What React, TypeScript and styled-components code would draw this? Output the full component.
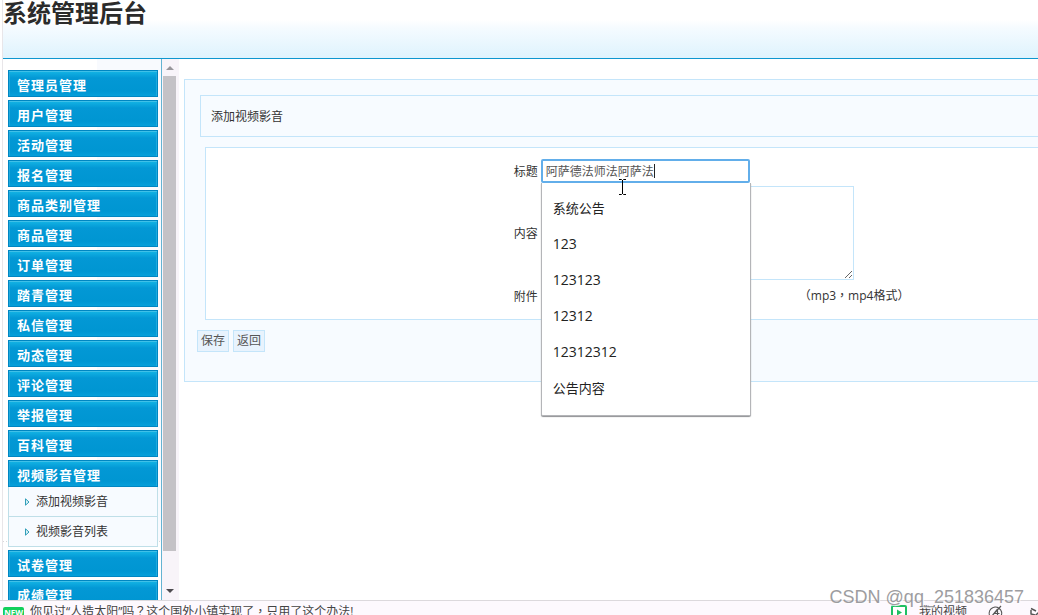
import React, { useState } from "react";
import styled, { createGlobalStyle } from "styled-components";

const Global = createGlobalStyle`
  * { box-sizing: border-box; }
  body {
    margin: 0;
    background: #fff;
    color: #333;
    font: 12px/18px "Open Sans", "Noto Sans CJK SC", sans-serif;
    overflow: hidden;
  }
  button, input, textarea { font: inherit; color: inherit; }
`;

const Page = styled.div`
  position: relative;
  display: flex;
  flex-direction: column;
  height: 100vh;
  overflow: hidden;
`;

const Frame = styled.div`
  flex: 1;
  min-height: 0;
  display: flex;
  flex-direction: column;
  margin-left: 2px;
  border-left: 1px solid #e8e6e9;
`;

const Header = styled.header`
  flex: none;
  height: 59px;
  border-bottom: 1px solid #0e97cf;
  background: linear-gradient(#fff 20px, #f5fbff 28px, #def3fd 58px);
`;

const Title = styled.h1`
  margin: 0;
  font-size: 24px;
  line-height: 26px;
  color: #2b2b2b;
`;

const Columns = styled.div`
  flex: 1;
  min-height: 0;
  display: flex;
`;

const Sidebar = styled.nav`
  flex: none;
  width: 159px;
  padding: 11px 3px 0 5px;
  border-right: 1px solid #64b3d2;
  background:
    repeating-linear-gradient(90deg, #d8d8da 0 1px, transparent 1px 3px) 0 482px / 100% 1px no-repeat,
    linear-gradient(90deg, #f8fafe, #f8fafe) 100% 0 / 64px 482px no-repeat;
  overflow: hidden;
`;

const Group = styled.section`
  margin-bottom: 3px;
`;

const GroupButton = styled.button`
  display: block;
  width: 100%;
  height: 27px;
  padding: 2px 8px 0;
  border: 1px solid #0086c2;
  background: linear-gradient(#14b5e5, #0398d5 7px, #0096d2 20px, #069fda);
  box-shadow: inset 0 1px #3fc0e8, inset -1px 0 #1eaade, inset 1px 0 #1eaade;
  color: #fff;
  font-size: 13px;
  font-weight: bold;
  line-height: 20px;
  letter-spacing: 1px;
  text-align: left;
`;

const SubLink = styled.a`
  display: flex;
  align-items: center;
  gap: 6px;
  height: 30px;
  padding-left: 16px;
  border: 1px solid #bfdfe8;
  border-top: 0;
  background: #f7fbff;
  color: #333;
  text-decoration: none;
`;

const Scrollbar = styled.div`
  flex: none;
  display: flex;
  flex-direction: column;
  align-items: center;
  justify-content: space-between;
  width: 17px;
  padding: 7px 2px 7px 0;
  background: #f8f4f9;
`;

const Thumb = styled.div`
  flex: 1;
  width: 13px;
  margin: 6px 0 38px;
  background: #c4c2c6;
`;

const Main = styled.main`
  flex: 1;
  min-width: 0;
  padding: 20px 0 0 5px;
`;

const Panel = styled.form`
  padding: 15px 0 29px 12px;
  border: 1px solid #c4e5fa;
  border-right: 0;
  background: #f7fbff;
`;

const PanelTitle = styled.h2`
  margin: 0 0 10px 3px;
  padding: 11px 10px 9px;
  border: 1px solid #c4e5fa;
  border-right: 0;
  font-size: 12px;
  font-weight: normal;
  line-height: 20px;
`;

const Fields = styled.div`
  display: flex;
  flex-direction: column;
  gap: 3px;
  margin-left: 8px;
  padding: 11px 0 10px;
  border: 1px solid #c4e5fa;
  border-right: 0;
  background: #fff;
`;

const Row = styled.div`
  display: grid;
  grid-template-columns: 40% 1fr;
  column-gap: 2px;
  align-items: center;
`;

const Label = styled.label`
  padding: 1px 1px 0 0;
  text-align: right;
`;

const Control = styled.div`
  position: relative;
  display: flex;
  align-items: center;
`;

const TextInput = styled.input`
  width: 209px;
  height: 24px;
  padding: 0 3px 1px;
  border: 2px solid #62aeea;
  border-radius: 2px;
  outline: 0;
  background: #fff;
  color: #555;
`;

const TextArea = styled.textarea`
  display: block;
  width: 313px;
  height: 94px;
  border: 1px solid #c4e5fa;
  background: #fff;
  outline: 0;
`;

const FileInput = styled.input`
  width: 258px;
  height: 26px;
`;

const Hint = styled.span`
  font-family: "Open Sans", "Noto Sans CJK TC", sans-serif;
`;

const Suggestions = styled.ul`
  position: absolute;
  z-index: 2;
  top: 24px;
  left: 0;
  width: 210px;
  margin: 0;
  padding: 7px 0 9px;
  border: 1px solid #b4b5b8;
  border-top: 0;
  border-radius: 0 0 2px 2px;
  background: #fff;
  box-shadow: 0 1px 1px #8e9093;
  list-style: none;
  color: #222;
`;

const Suggestion = styled.li<{ $numeric: boolean }>`
  height: 36px;
  padding: 0 11px;
  font-size: ${(p) => (p.$numeric ? 14 : 13)}px;
  line-height: 36px;
`;

const Caret = styled.span`
  position: absolute;
  left: 113px;
  top: 5px;
  width: 1px;
  height: 14px;
  background: #222;
`;

const Pointer = styled.svg`
  position: absolute;
  z-index: 3;
  left: 77px;
  top: 20px;
`;

const Actions = styled.div`
  display: flex;
  gap: 4px;
  margin-top: 10px;
`;

const ActionButton = styled.button`
  width: 32px;
  height: 22px;
  padding: 0;
  border: 1px solid #c4e5fa;
  background: #e8f3fd;
  color: #555;
  line-height: 18px;
`;

const StatusBar = styled.footer`
  flex: none;
  display: flex;
  justify-content: space-between;
  height: 15px;
  padding-left: 3px;
  border-top: 1px solid #dcd9dd;
  background: #fdf9fe;
  color: #444;
  line-height: 22px;
  overflow: hidden;
`;

const News = styled.a`
  display: flex;
  gap: 6px;
  color: inherit;
  text-decoration: none;
  white-space: nowrap;
`;

const Badge = styled.span`
  width: 21px;
  height: 12px;
  margin-top: 6px;
  border-radius: 2px;
  background: #12cf5c;
  color: #fff;
  font-size: 8px;
  font-weight: bold;
  line-height: 11px;
  text-align: center;
`;

const Tools = styled.div`
  display: flex;
  flex: none;

  svg { flex: none; margin-top: 4px; }
  span { margin: 0 21px 0 12px; white-space: nowrap; }
  svg + svg { margin-left: 26px; margin-right: -8px; }
`;

const Watermark = styled.div`
  position: absolute;
  z-index: 4;
  right: 14px;
  bottom: 8px;
  color: #8d8d90;
  font: 18px/20px "Liberation Sans", sans-serif;
  text-shadow: 1px 1px #fff;
  opacity: 0.85;
  pointer-events: none;
`;

const GROUPS: { name: string; links?: string[] }[] = [
  { name: "管理员管理" },
  { name: "用户管理" },
  { name: "活动管理" },
  { name: "报名管理" },
  { name: "商品类别管理" },
  { name: "商品管理" },
  { name: "订单管理" },
  { name: "踏青管理" },
  { name: "私信管理" },
  { name: "动态管理" },
  { name: "评论管理" },
  { name: "举报管理" },
  { name: "百科管理" },
  { name: "视频影音管理", links: ["添加视频影音", "视频影音列表"] },
  { name: "试卷管理" },
  { name: "成绩管理" },
];

const HISTORY = ["系统公告", "123", "123123", "12312", "12312312", "公告内容"];

const ScrollArrow = ({ down = false }: { down?: boolean }) => (
  <svg width="8" height="4" viewBox="0 0 8 4">
    <path d={down ? "M0 0h8L4 4z" : "M0 4h8L4 0z"} fill={down ? "#4c4a4f" : "#98969b"} />
  </svg>
);

export default function App() {
  const [title, setTitle] = useState("阿萨德法师法阿萨法");
  return (
    <Page>
      <Global />
      <Frame>
        <Header>
          <Title>系统管理后台</Title>
        </Header>
        <Columns>
          <Sidebar>
            {GROUPS.map((g) => (
              <Group key={g.name}>
                <GroupButton type="button">{g.name}</GroupButton>
                {g.links?.map((l) => (
                  <SubLink href="#" key={l}>
                    <svg width="5" height="8" viewBox="0 0 5 8">
                      <path d="M.5.8v6.400L4 4z" fill="#d9f1f7" stroke="#319fb9" />
                    </svg>
                    {l}
                  </SubLink>
                ))}
              </Group>
            ))}
          </Sidebar>
          <Scrollbar>
            <ScrollArrow />
            <Thumb />
            <ScrollArrow down />
          </Scrollbar>
          <Main>
            <Panel onSubmit={(e) => e.preventDefault()}>
              <PanelTitle>添加视频影音</PanelTitle>
              <Fields>
                <Row>
                  <Label htmlFor="title">标题</Label>
                  <Control>
                    <TextInput
                      id="title"
                      autoComplete="off"
                      value={title}
                      onChange={(e) => setTitle(e.target.value)}
                    />
                    <Caret />
                    <Suggestions>
                      {HISTORY.map((h) => (
                        <Suggestion key={h} $numeric={/^\d+$/.test(h)}>
                          {h}
                        </Suggestion>
                      ))}
                    </Suggestions>
                    <Pointer width="9" height="16" viewBox="0 0 9 16">
                      <path
                        d="M1 .5h2.500l1 1 1-1H8M4.500 1v14M1 15.500h2.500l1-1 1 1H8"
                        fill="none"
                        stroke="#000"
                      />
                    </Pointer>
                  </Control>
                </Row>
                <Row>
                  <Label htmlFor="content">内容</Label>
                  <Control>
                    <TextArea id="content" />
                  </Control>
                </Row>
                <Row>
                  <Label htmlFor="file">附件</Label>
                  <Control>
                    <FileInput id="file" type="file" />
                    <Hint>（mp3，mp4格式）</Hint>
                  </Control>
                </Row>
              </Fields>
              <Actions>
                <ActionButton type="submit">保存</ActionButton>
                <ActionButton type="button">返回</ActionButton>
              </Actions>
            </Panel>
          </Main>
        </Columns>
      </Frame>
      <StatusBar>
        <News href="#">
          <Badge>NEW</Badge>
          <Hint>你见过“人造太阳”吗？这个国外小镇实现了，只用了这个办法!</Hint>
        </News>
        <Tools>
          <svg width="16" height="14" viewBox="0 0 16 14">
            <rect x="1" y="1" width="14" height="14" rx="1" fill="#fff" stroke="#1fc063" strokeWidth="2" />
            <path d="M6 4.500v6l5-3z" fill="#1fc063" />
          </svg>
          <span>我的视频</span>
          <svg width="16" height="14" viewBox="0 0 16 14" fill="none" stroke="#555" strokeWidth="1.200">
            <path d="M2.500 12A6.200 6.200 0 1 1 13 11M13 1L2 13M9.500 4L6 8.500h5.500M9.500 4v8" />
          </svg>
          <svg width="16" height="14" viewBox="0 0 16 14" fill="none" stroke="#555" strokeWidth="1.500">
            <path d="M1 3.500l5 2.500M1 5v4l4 1M3 13L13 3" />
          </svg>
        </Tools>
      </StatusBar>
      <Watermark>CSDN @qq_251836457</Watermark>
    </Page>
  );
}
